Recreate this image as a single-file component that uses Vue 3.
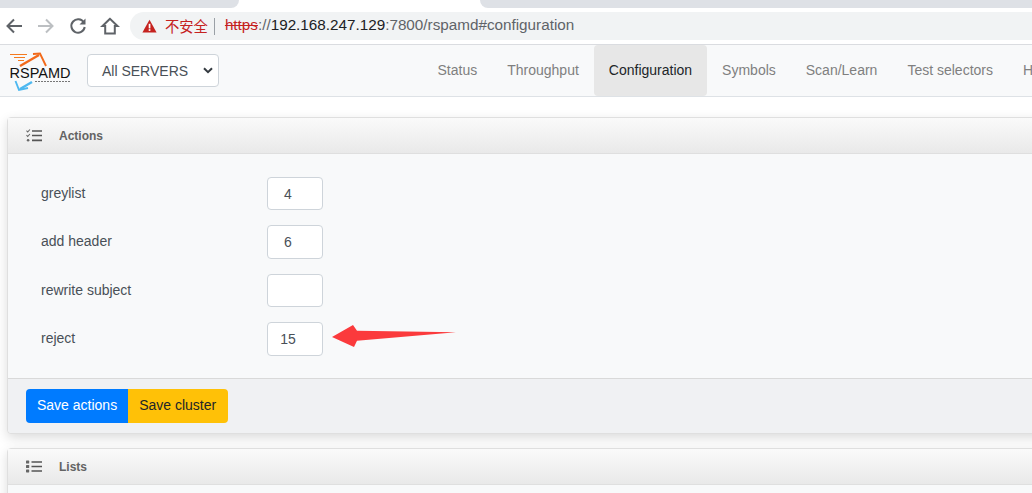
<script setup>
const tabs = [
  { label: 'Status' },
  { label: 'Throughput' },
  { label: 'Configuration', active: true },
  { label: 'Symbols' },
  { label: 'Scan/Learn' },
  { label: 'Test selectors' },
  { label: 'History' },
]
const actions = [
  { label: 'greylist', value: '4' },
  { label: 'add header', value: '6' },
  { label: 'rewrite subject', value: '' },
  { label: 'reject', value: '15', arrow: true },
]
</script>

<template>
  <div class="page">
    <div class="tabstrip">
      <div class="tab-left"></div>
      <div class="tab-right"></div>
    </div>
    <div class="toolbar">
      <svg class="nav" width="20" height="20" viewBox="0 0 20 20"><path d="M18 10H4M10 3.500 3.500 10l6.500 6.500" fill="none" stroke="#5f6368" stroke-width="2"/></svg>
      <svg class="nav n2" width="20" height="20" viewBox="0 0 20 20"><path d="M2 10h14M10 3.500 16.500 10 10 16.500" fill="none" stroke="#bcbfc2" stroke-width="2"/></svg>
      <svg class="nav n3" width="20" height="20" viewBox="0 0 20 20"><path d="M15.800 6.500A6.700 6.700 0 1 0 16.700 11" fill="none" stroke="#5f6368" stroke-width="2"/><path d="M17.500 2.500v6h-6z" fill="#5f6368"/></svg>
      <svg class="nav n4" width="20" height="20" viewBox="0 0 20 20"><path d="M10 2.800 2.500 10h2.700v7.500h9.600V10h2.700z" fill="none" stroke="#5f6368" stroke-width="2"/></svg>
      <div class="omnibox">
        <svg class="warn" width="15" height="14" viewBox="0 0 15 14"><path d="M7.500.8 14.600 13.400H.4z" fill="#c5221f"/><rect x="6.700" y="4.800" width="1.700" height="4.600" fill="#fff"/><rect x="6.700" y="10.200" width="1.700" height="1.700" fill="#fff"/></svg>
        <span class="insecure">不安全</span>
        <span class="sep"></span>
        <span class="url"><s class="https">https</s><span class="dim">://</span><span class="host">192.168.247.129</span><span class="dim">:7800/rspamd#configuration</span></span>
      </div>
    </div>
    <nav class="navbar">
      <svg class="logo" width="64" height="40" viewBox="8 52 64 40">
        <path d="M10 54.500h17M14 57.500h11M18 60.500h6" stroke="#f47a20" stroke-width="1.100" fill="none"/>
        <path d="M20 66 39 55" stroke="#f26a1b" stroke-width="2.400" fill="none"/>
        <path d="M33 54 40 53.500 46 66" stroke="#f26a1b" stroke-width="1.900" fill="none"/>
        <text x="9.500" y="78" textLength="61" lengthAdjust="spacingAndGlyphs" class="logo-text">RSPAMD</text>
        <path d="M20 89 32 82" stroke="#4db8f0" stroke-width="2.400" fill="none"/>
        <path d="M15.500 81 19 90 28 88" stroke="#4db8f0" stroke-width="1.900" fill="none"/>
        <path d="M35 81.500h36" stroke="#777" stroke-width="1" stroke-dasharray="2 1" fill="none"/>
      </svg>
      <div class="selectbox"><span>All SERVERS</span><svg width="10" height="7" viewBox="0 0 10 7"><path d="M1 1.200 5 5.200l4-4" fill="none" stroke="#343a40" stroke-width="2"/></svg></div>
      <ul class="tabs">
        <li v-for="t in tabs" :key="t.label" class="tabitem" :class="{ active: t.active }">{{ t.label }}</li>
      </ul>
    </nav>
    <main class="content">
      <section class="card">
        <header class="card-head">
          <svg class="cardicon" width="16" height="13" viewBox="0 0 16 13"><path d="M.5 1.700 1.700 3 3.900.5M.5 6.200 1.700 7.500 3.900 5" fill="none" stroke="#666" stroke-width="1.100"/><rect x=".8" y="10" width="2.600" height="2.600" rx="1.300" fill="#666"/><path d="M6 2h10M6 6.500h10M6 11.300h10" stroke="#555" stroke-width="1.700"/></svg>
          <span class="title">Actions</span>
        </header>
        <div class="card-body">
          <div v-for="a in actions" :key="a.label" class="row">
            <label class="rowlabel">{{ a.label }}</label>
            <input class="num" type="text" :value="a.value" />
            <svg v-if="a.arrow" class="arrow" width="126" height="24" viewBox="0 0 126 24"><path d="M0 12 21 0l4 5.700 99 1.600-99 8.400-3 6.300z" fill="#fb3a3c"/></svg>
          </div>
        </div>
        <footer class="card-foot">
          <div class="btngroup">
            <button class="btn primary">Save actions</button>
            <button class="btn warning">Save cluster</button>
          </div>
        </footer>
      </section>
      <section class="card second">
        <header class="card-head">
          <svg class="cardicon" width="16" height="13" viewBox="0 0 16 13"><rect x="0" y=".6" width="3.200" height="3" rx=".6" fill="#666"/><rect x="0" y="5" width="3.200" height="3" rx=".6" fill="#666"/><rect x="0" y="9.400" width="3.200" height="3" rx=".6" fill="#666"/><path d="M5.500 2h10.500M5.500 6.500h10.500M5.500 11h10.500" stroke="#555" stroke-width="1.700"/></svg>
          <span class="title">Lists</span>
        </header>
        <div class="second-body"></div>
      </section>
    </main>
  </div>
</template>

<style>
html, body { margin: 0; overflow: hidden; background: #fff; }
</style>

<style scoped>
.page { width: 1032px; height: 493px; overflow: hidden; font-family: "Liberation Sans", Arial, sans-serif; color: #495057; font-size: 14px; }
.tabstrip { height: 8px; background: #fff; display: flex; justify-content: space-between; }
.tab-left { width: 239px; background: #dee1e6; border-bottom-right-radius: 8px; }
.tab-right { flex: 1; margin-left: 241px; background: #dee1e6; border-bottom-left-radius: 8px; }
.toolbar { height: 37px; background: #fff; display: flex; align-items: center; padding: 0 0 0 4px; box-sizing: border-box; border-bottom: 1px solid #dadce0; }
.nav { flex: none; }
.n2 { margin-left: 12px; }
.n3 { margin-left: 12px; }
.n4 { margin-left: 12px; }
.omnibox { flex: 1; margin-left: 10px; height: 28px; background: #f1f3f4; border-radius: 14px 0 0 14px; display: flex; align-items: center; padding-left: 12px; }
.warn { flex: none; }
.insecure { margin-left: 8px; color: #c5221f; font-size: 14.300px; font-family: "Noto Sans CJK SC", sans-serif; line-height: 1; }
.sep { width: 1px; height: 17px; background: #9aa0a6; margin: 0 10px 0 6px; }
.url { font-size: 15.250px; line-height: 26px; margin-bottom: 2px; white-space: nowrap; font-family: "Liberation Sans", sans-serif; }
.https { color: #c5221f; }
.dim { color: #5f6368; }
.host { color: #202124; }
.navbar { height: 52px; box-sizing: border-box; background: #f8f9fa; border-bottom: 1px solid #dee2e6; display: flex; align-items: center; padding-left: 8px; }
.logo { flex: none; margin-top: 3px; }
.logo-text { font-family: "Liberation Sans", sans-serif; font-size: 14.500px; fill: #111; }
.selectbox { flex: none; margin-left: 15px; width: 132px; height: 33px; box-sizing: border-box; background: #fff; border: 1px solid #ced4da; border-radius: 4px; display: flex; align-items: center; justify-content: space-between; padding: 0 5px 0 14px; font-size: 14px; color: #495057; }
.tabs { list-style: none; margin: 0 0 0 203.500px; padding: 0; display: flex; height: 51px; flex: none; }
.tabitem { padding: 0 15px; line-height: 51px; color: #7f7f7f; white-space: nowrap; }
.tabitem.active { background: #e7e7e7; color: #212529; border-radius: 4px; }
.content { padding: 20px 0 0 7px; }
.card { width: 1040px; background: #f8f9fa; border: 1px solid #dfdfdf; border-radius: 4px; box-shadow: 0 4px 12px rgba(0,0,0,.14); box-sizing: border-box; }
.second { margin-top: 14px; }
.card-head { height: 36px; box-sizing: border-box; border-bottom: 1px solid #dfdfdf; background: linear-gradient(#fafafa, #e9e9e9); display: flex; align-items: center; padding-left: 18px; }
.cardicon { flex: none; }
.title { margin-left: 17px; font-size: 12px; font-weight: 700; color: #636363; }
.card-body { padding: 23px 0 0 33px; height: 224px; box-sizing: border-box; display: flex; flex-direction: column; gap: 15px; }
.second-body { height: 40px; }
.row { display: flex; align-items: center; height: 33.400px; position: relative; }
.rowlabel { width: 226px; flex: none; color: #495057; font-size: 14px; position: relative; top: -0.700px; }
.num { width: 56px; height: 33.400px; box-sizing: border-box; border: 1px solid #ced4da; border-radius: 4px; background: #fff; padding: 0 14px 0 0; text-align: center; font: 14px "Liberation Sans", sans-serif; color: #495057; outline: none; }
.arrow { position: absolute; left: 291px; top: 3px; }
.card-foot { height: 55px; box-sizing: border-box; border-top: 1px solid #d9d9d9; background: #f0f1f3; display: flex; align-items: center; padding-left: 18px; border-radius: 0 0 4px 4px; }
.btngroup { display: flex; }
.btn { height: 34px; border: 0; font: 14px "Liberation Sans", sans-serif; padding: 0 11px 2px; }
.primary { background: #007bff; color: #fff; border-radius: 4px 0 0 4px; }
.warning { background: #ffc107; color: #212529; border-radius: 0 4px 4px 0; padding-right: 12px; }
</style>
